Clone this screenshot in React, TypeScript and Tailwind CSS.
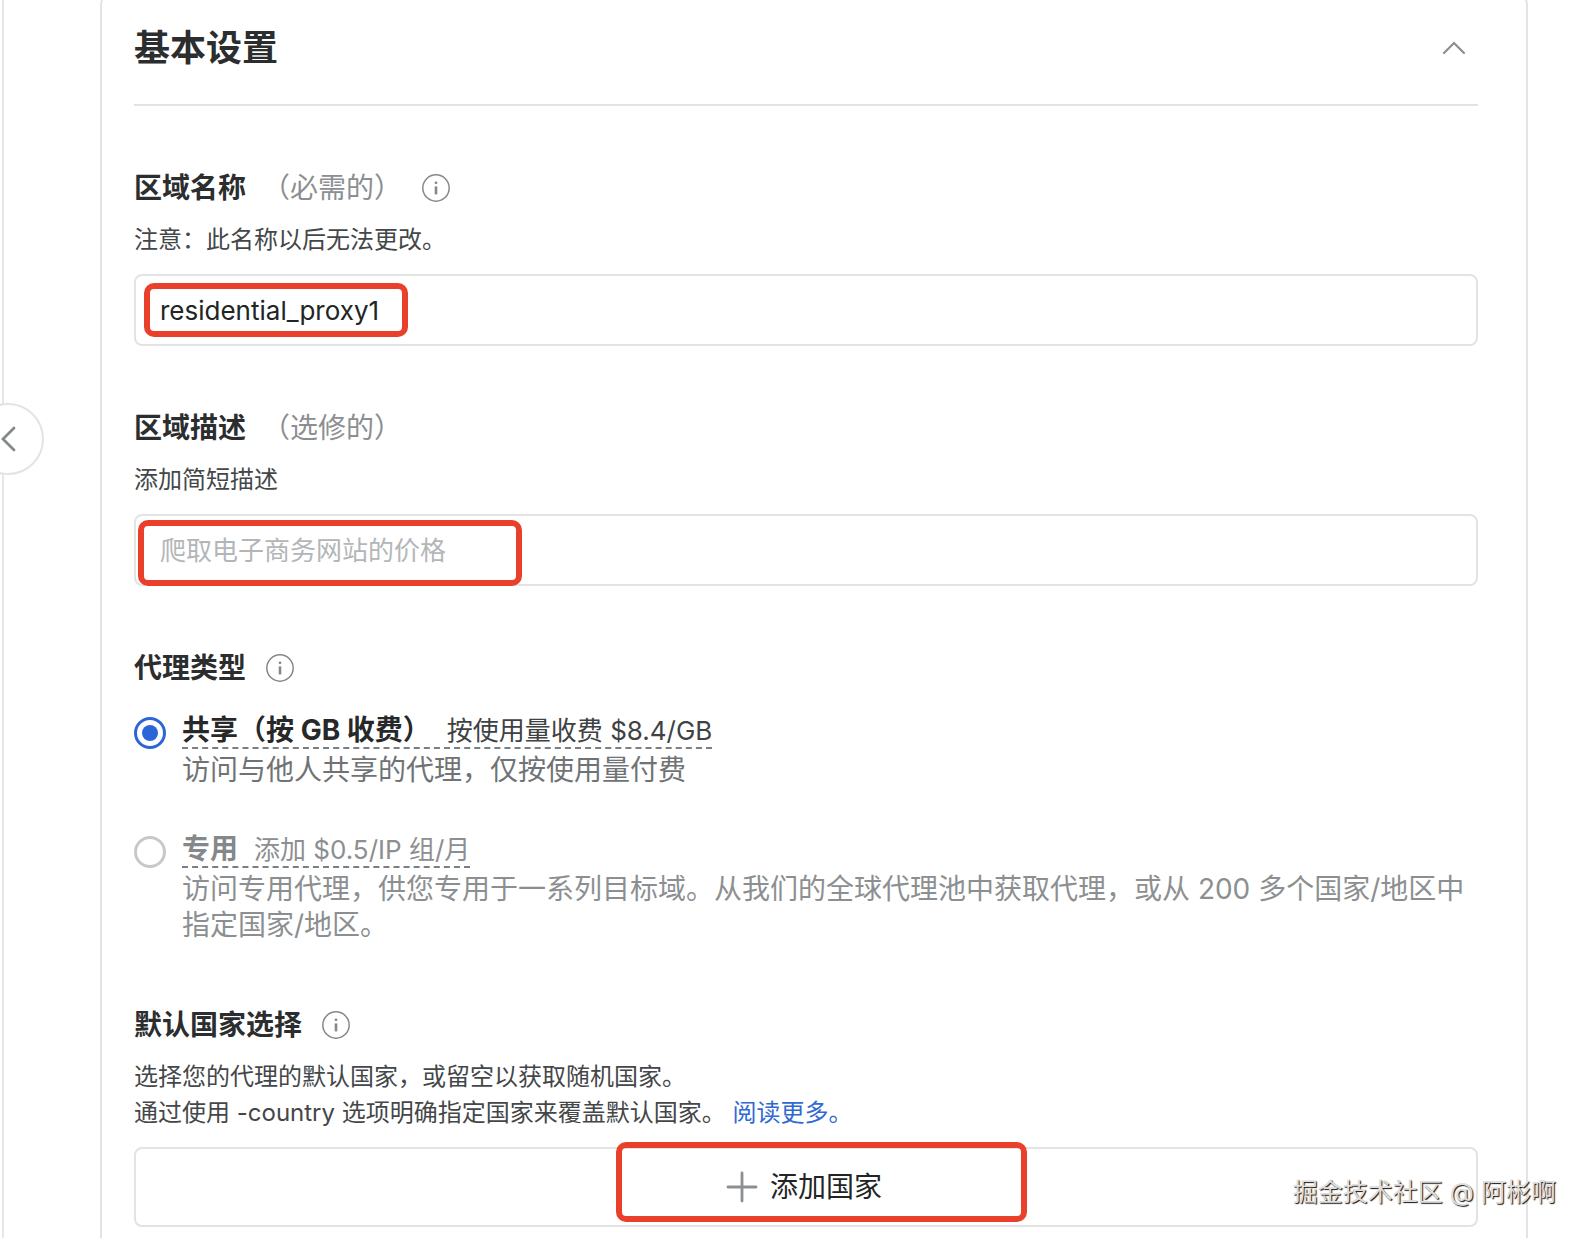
import { type ReactNode, useState } from "react";

function InfoIcon() {
  return (
    <svg
      viewBox="0 0 28 28"
      fill="none"
      className="size-7 shrink-0 text-[#85888a]"
      aria-hidden="true"
    >
      <circle cx="14" cy="14" r="13.2" stroke="currentColor" strokeWidth="1.5" />
      <circle cx="14" cy="8.8" r="1.4" fill="currentColor" />
      <path d="M14 12.4V20.4" stroke="currentColor" strokeWidth="2.6" />
    </svg>
  );
}

function FieldLabel({
  htmlFor,
  hint,
  info,
  children,
}: {
  htmlFor?: string;
  hint?: string;
  info?: boolean;
  children: ReactNode;
}) {
  return (
    <div className="mt-16 flex items-center gap-5 text-[28px] leading-9">
      <div className="flex items-center gap-4">
        {htmlFor ? (
          <label htmlFor={htmlFor} className="font-bold text-[#2b2d2e]">
            {children}
          </label>
        ) : (
          <h3 className="font-bold text-[#2b2d2e]">{children}</h3>
        )}
        {hint ? <span className="text-[#8c8f91]">{hint}</span> : null}
      </div>
      {info ? <InfoIcon /> : null}
    </div>
  );
}

/* Red marker frame drawn over a control */
function Marker({ className }: { className: string }) {
  return (
    <div
      aria-hidden="true"
      className={
        "pointer-events-none absolute rounded-[10px] border-6 border-[#e8402a] " +
        className
      }
    />
  );
}

const PROXY_TYPES = [
  {
    id: "shared",
    title: "共享（按 GB 收费）",
    price: "按使用量收费 $8.4/GB",
    description: "访问与他人共享的代理，仅按使用量付费",
    titleClass: "text-[#262829]",
    priceClass: "text-[#3f4244]",
    descriptionClass: "text-[#6f7375]",
  },
  {
    id: "dedicated",
    title: "专用",
    price: "添加 $0.5/IP 组/月",
    description:
      "访问专用代理，供您专用于一系列目标域。从我们的全球代理池中获取代理，或从 200 多个国家/地区中指定国家/地区。",
    titleClass: "text-[#85888a]",
    priceClass: "text-[#8c8f91]",
    descriptionClass: "text-[#8c8f91]",
  },
];

const inputClass =
  "block h-18 w-full rounded-lg border-2 border-[#e2e3e3] bg-white px-6 text-[26px] text-[#222425] outline-none placeholder:text-[#b3b6b8]";

export default function App() {
  const [name, setName] = useState("residential_proxy1");
  const [proxyType, setProxyType] = useState("shared");

  return (
    <div className="relative flex min-h-screen overflow-hidden bg-white pr-15 pl-[2px] font-[Inter,'Noto_Sans_CJK_SC',sans-serif]">
      <div className="w-[98px] shrink-0 border-l-2 border-[#e6e7e7]" />
      <button
        type="button"
        aria-label="收起"
        className="absolute top-[403px] -left-7 flex size-18 items-center justify-end rounded-full border-2 border-[#e2e3e3] bg-white pr-[26px]"
      >
        <svg viewBox="0 0 16 26" fill="none" className="h-[26px] w-4 shrink-0">
          <path
            d="M14 2L3 13L14 24"
            stroke="#85888a"
            strokeWidth="2.8"
            strokeLinecap="round"
          />
        </svg>
      </button>

      <main className="-mt-1 min-w-0 flex-1 rounded-t-lg border-2 border-b-0 border-[#e2e3e3] pr-12 pl-8">
        <header className="flex items-center justify-between border-b-2 border-[#e2e3e3] pt-[26px] pr-3 pb-8">
          <h2 className="text-4xl leading-12 font-bold text-[#2b2d2e]">
            基本设置
          </h2>
          <button type="button" aria-label="折叠">
            <svg viewBox="0 0 24 14" fill="none" className="h-[14px] w-6">
              <path
                d="M2 12L12 2L22 12"
                stroke="#8c8f91"
                strokeWidth="2.2"
                strokeLinecap="round"
              />
            </svg>
          </button>
        </header>

        <FieldLabel htmlFor="zone-name" hint="（必需的）" info>
          区域名称
        </FieldLabel>
        <p className="mt-4 text-2xl leading-9 text-[#444749]">
          注意：此名称以后无法更改。
        </p>
        <div className="relative mt-4">
          <input
            id="zone-name"
            type="text"
            value={name}
            onChange={(e) => setName(e.target.value)}
            className={inputClass}
          />
          <Marker className="top-[9px] left-[10px] h-[54px] w-[264px]" />
        </div>

        <FieldLabel htmlFor="zone-description" hint="（选修的）">
          区域描述
        </FieldLabel>
        <p className="mt-4 text-2xl leading-9 text-[#444749]">添加简短描述</p>
        <div className="relative mt-4">
          <input
            id="zone-description"
            type="text"
            placeholder="爬取电子商务网站的价格"
            className={inputClass}
          />
          <Marker className="top-[6px] left-1 h-[66px] w-[384px]" />
        </div>

        <FieldLabel info>代理类型</FieldLabel>
        <div className="mt-[27px] flex flex-col gap-11">
          {PROXY_TYPES.map((type) => (
            <label key={type.id} className="flex items-start gap-4">
              <input
                type="radio"
                name="proxy-type"
                value={type.id}
                checked={proxyType === type.id}
                onChange={() => setProxyType(type.id)}
                className="mt-1 grid size-8 shrink-0 appearance-none place-items-center rounded-full border-3 border-[#c6c8c9] bg-white before:size-4 before:rounded-full checked:border-[#2b66d9] checked:before:bg-[#2b66d9]"
              />
              <span className="min-w-0">
                <span className="flex h-9 w-fit items-center gap-4 border-b-2 border-dashed border-[#7c7f81]">
                  <span className={"text-[28px] font-bold " + type.titleClass}>
                    {type.title}
                  </span>
                  <span className={"text-[26px] " + type.priceClass}>
                    {type.price}
                  </span>
                </span>
                <span
                  className={
                    "mt-[3px] block text-[28px] leading-9 " +
                    type.descriptionClass
                  }
                >
                  {type.description}
                </span>
              </span>
            </label>
          ))}
        </div>

        <FieldLabel info>默认国家选择</FieldLabel>
        <p className="mt-4 text-2xl leading-9 text-[#444749]">
          选择您的代理的默认国家，或留空以获取随机国家。
          <br />
          通过使用 -country 选项明确指定国家来覆盖默认国家。{" "}
          <a href="#country" className="text-[#2f69d2]">
            阅读更多。
          </a>
        </p>
        <div className="relative mt-4">
          <button
            type="button"
            className="flex h-20 w-full items-center justify-center gap-3 rounded-lg border-2 border-[#e2e3e3] bg-white pr-1 text-[28px] text-[#222425]"
          >
            <svg viewBox="0 0 32 32" fill="none" className="size-8">
              <path
                d="M16 2V30M2 16H30"
                stroke="#8c8f91"
                strokeWidth="2.8"
                strokeLinecap="round"
              />
            </svg>
            添加国家
          </button>
          <Marker className="-top-[5px] left-1/2 -ml-[190px] h-20 w-[411px]" />
        </div>
      </main>

      <p className="pointer-events-none absolute right-8 bottom-7 text-[25px] leading-9 text-[#dedede] [text-shadow:1px_1px_1px_#111]">
        掘金技术社区 @ 阿彬啊
      </p>
    </div>
  );
}
